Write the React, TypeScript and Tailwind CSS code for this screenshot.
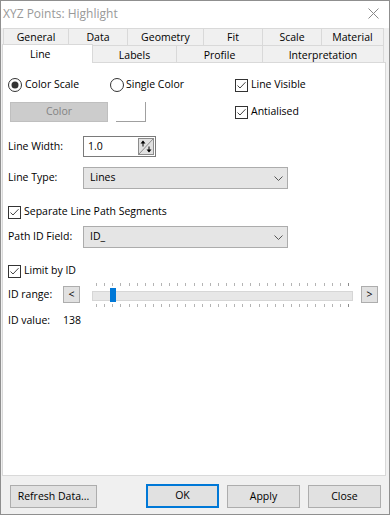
import React from 'react';

const row1 = [
  { label: 'General', w: 'w-[65px]' },
  { label: 'Data', w: 'w-[59px]' },
  { label: 'Geometry', w: 'w-[76px]' },
  { label: 'Fit', w: 'w-[59px]' },
  { label: 'Scale', w: 'w-[59px]' },
];

function Radio({ checked }: { checked?: boolean }) {
  return (
    <svg width="14" height="14" viewBox="0 0 14 14" className="shrink-0">
      <circle cx="7" cy="7" r="6.5" fill="#fff" stroke="#333" />
      {checked && <circle cx="7" cy="7" r="3.5" fill="#333" />}
    </svg>
  );
}

function Check() {
  return (
    <svg width="13" height="13" viewBox="0 0 13 13" className="shrink-0">
      <rect x="0.5" y="0.5" width="12" height="12" fill="#fff" stroke="#333" />
      <path d="M2.5 6.5 L5 9 L10.5 3.2" fill="none" stroke="#444" strokeWidth="1" />
    </svg>
  );
}

function Chevron() {
  return (
    <svg width="9" height="5" viewBox="0 0 9 5">
      <polyline points="0.5,0.5 4.5,4.5 8.5,0.5" fill="none" stroke="#555" />
    </svg>
  );
}

function Select({ value }: { value: string }) {
  return (
    <div className="w-[205px] h-full bg-[#e5e5e5] border border-[#acacac] pl-[6px] pr-[4px] flex items-center justify-between">
      <span>{value}</span>
      <Chevron />
    </div>
  );
}

export default function App() {
  const ticks = Array.from({ length: 32 });

  return (
    <div className="w-[390px] h-[515px] border border-[#8f8f8f] bg-[#f0f0f0] flex flex-col text-[10.5px] text-black font-['Open_Sans','Segoe_UI',sans-serif] overflow-hidden">
      {/* title bar */}
      <div className="h-[27px] shrink-0 bg-white flex items-center justify-between pl-[2px] pr-[10px] pb-[2px]">
        <span className="text-[12px] text-[#999]">XYZ Points: Highlight</span>
        <svg width="11" height="11" viewBox="0 0 11 11">
          <path d="M0.5 0.5 L10.5 10.5 M10.5 0.5 L0.5 10.5" stroke="#888" strokeWidth="1" />
        </svg>
      </div>

      {/* tabs */}
      <div className="flex h-[17px] shrink-0 ml-[2px]">
        {row1.map((t) => (
          <div key={t.label} className={`${t.w} h-full border-l border-t border-[#d9d9d9] flex items-center justify-center pt-[2px]`}>
            {t.label}
          </div>
        ))}
        <div className="w-[63px] h-full border-l border-t border-r border-[#d9d9d9] flex items-center justify-center pt-[2px]">Material</div>
      </div>
      <div className="flex h-[17px] shrink-0 ml-[1px]">
        <div className="relative z-10 -mt-[1px] w-[91px] h-[19px] bg-white border-l border-t border-r border-[#d9d9d9] flex items-start pt-[2px] pl-[27px]">
          Line
        </div>
        <div className="w-[83px] h-full border-t border-[#d9d9d9] flex items-center justify-center pt-[3px]">Labels</div>
        <div className="w-[86px] h-full border-l border-t border-[#d9d9d9] flex items-center justify-center pt-[3px]">Profile</div>
        <div className="w-[122px] h-full border-l border-t border-r border-[#d9d9d9] flex items-center justify-center pt-[3px]">Interpretation</div>
      </div>

      {/* panel */}
      <div className="ml-[1px] w-[384px] h-[414px] shrink-0 bg-white border border-[#d9d9d9] pl-[5px] pt-[15px] flex flex-col">
        <div className="flex">
          <div className="w-[227px] flex flex-col">
            <div className="h-[14px] flex items-center">
              <div className="w-[102px] flex items-center">
                <Radio checked />
                <span className="ml-[3px]">Color Scale</span>
              </div>
              <Radio />
              <span className="ml-[2px]">Single Color</span>
            </div>
            <div className="mt-[10px] h-[20px] flex">
              <div className="ml-[2px] w-[98px] h-full bg-[#cccccc] border border-[#bfbfbf] text-[#838383] flex items-center justify-center">
                Color
              </div>
              <div className="ml-[8px] w-[30px] h-full bg-white border-r border-b border-[#a0a0a0]" />
            </div>
          </div>
          <div className="flex flex-col">
            <div className="h-[14px] flex items-center">
              <Check />
              <span className="ml-[3px]">Line Visible</span>
            </div>
            <div className="mt-[13px] h-[14px] flex items-center">
              <Check />
              <span className="ml-[3px]">Antialised</span>
            </div>
          </div>
        </div>

        <div className="mt-[14px] h-[21px] flex items-center">
          <span className="w-[75px]">Line Width:</span>
          <div className="w-[73px] h-full border border-[#7a7a7a] flex items-center justify-between pl-[4px] pr-[1px]">
            <span>1.0</span>
            <svg width="16" height="17" viewBox="0 0 16 17">
              <rect x="0.5" y="0.5" width="15" height="16" fill="#e1e1e1" stroke="#8c8c8c" />
              <line x1="1" y1="16" x2="15" y2="1" stroke="#8c8c8c" />
              <line x1="5" y1="3.5" x2="5" y2="8.5" stroke="#000" />
              <polygon points="2.5,5.5 5,2.5 7.5,5.5" fill="#000" />
              <line x1="11" y1="8.5" x2="11" y2="13.5" stroke="#000" />
              <polygon points="8.5,11.5 11,14.5 13.5,11.5" fill="#000" />
            </svg>
          </div>
        </div>

        <div className="mt-[10px] h-[22px] flex items-center">
          <span className="w-[75px]">Line Type:</span>
          <Select value="Lines" />
        </div>

        <div className="mt-[16px] h-[14px] flex items-center">
          <Check />
          <span className="ml-[3px]">Separate Line Path Segments</span>
        </div>

        <div className="mt-[7px] h-[22px] flex items-center">
          <span className="w-[75px]">Path ID Field:</span>
          <Select value="ID_" />
        </div>

        <div className="mt-[16px] h-[14px] flex items-center">
          <Check />
          <span className="ml-[3px]">Limit by ID</span>
        </div>

        <div className="mt-[4px] h-[25px] flex items-center">
          <span className="w-[55px]">ID range:</span>
          <div className="w-[17px] h-[17px] bg-[#e1e1e1] border border-[#adadad] flex items-center justify-center">&lt;</div>
          <div className="ml-[12px] w-[261px] h-full flex flex-col">
            <div className="mt-[1px] h-[3px] flex justify-between px-[4px]">
              {ticks.map((_, i) => (
                <div key={i} className={i === 31 ? 'w-px h-full bg-[#8a8a8a]' : 'w-px h-full bg-[#b4b4b4]'} />
              ))}
            </div>
            <div className="relative mt-[5px] h-[10px] bg-[#e7e7e7] border border-[#d6d6d6]">
              <div className="absolute left-[17px] -top-[4px] w-[6px] h-[14px] bg-[#0078d7]" />
            </div>
            <div className="mt-[3px] h-[3px] flex justify-between px-[4px]">
              {ticks.map((_, i) => (
                <div key={i} className={i === 31 ? 'w-px h-full bg-[#8a8a8a]' : 'w-px h-full bg-[#b4b4b4]'} />
              ))}
            </div>
          </div>
          <div className="ml-[8px] w-[17px] h-[17px] bg-[#e1e1e1] border border-[#adadad] flex items-center justify-center">&gt;</div>
        </div>

        <div className="mt-[7px] h-[14px] flex items-center">
          <span className="w-[55px]">ID value:</span>
          <span>138</span>
        </div>
      </div>

      {/* buttons */}
      <div className="mt-[9px] pl-[9px] flex">
        <div className="w-[87px] h-[23px] bg-[#e1e1e1] border border-[#adadad] flex items-center justify-center">Refresh Data...</div>
        <div className="ml-[49px] w-[73px] h-[24px] -mt-[1px] bg-[#e1e1e1] border-2 border-[#0078d7] flex items-center justify-center">OK</div>
        <div className="ml-[8px] w-[73px] h-[23px] bg-[#e1e1e1] border border-[#adadad] flex items-center justify-center">Apply</div>
        <div className="ml-[8px] w-[73px] h-[23px] bg-[#e1e1e1] border border-[#adadad] flex items-center justify-center">Close</div>
      </div>
    </div>
  );
}
